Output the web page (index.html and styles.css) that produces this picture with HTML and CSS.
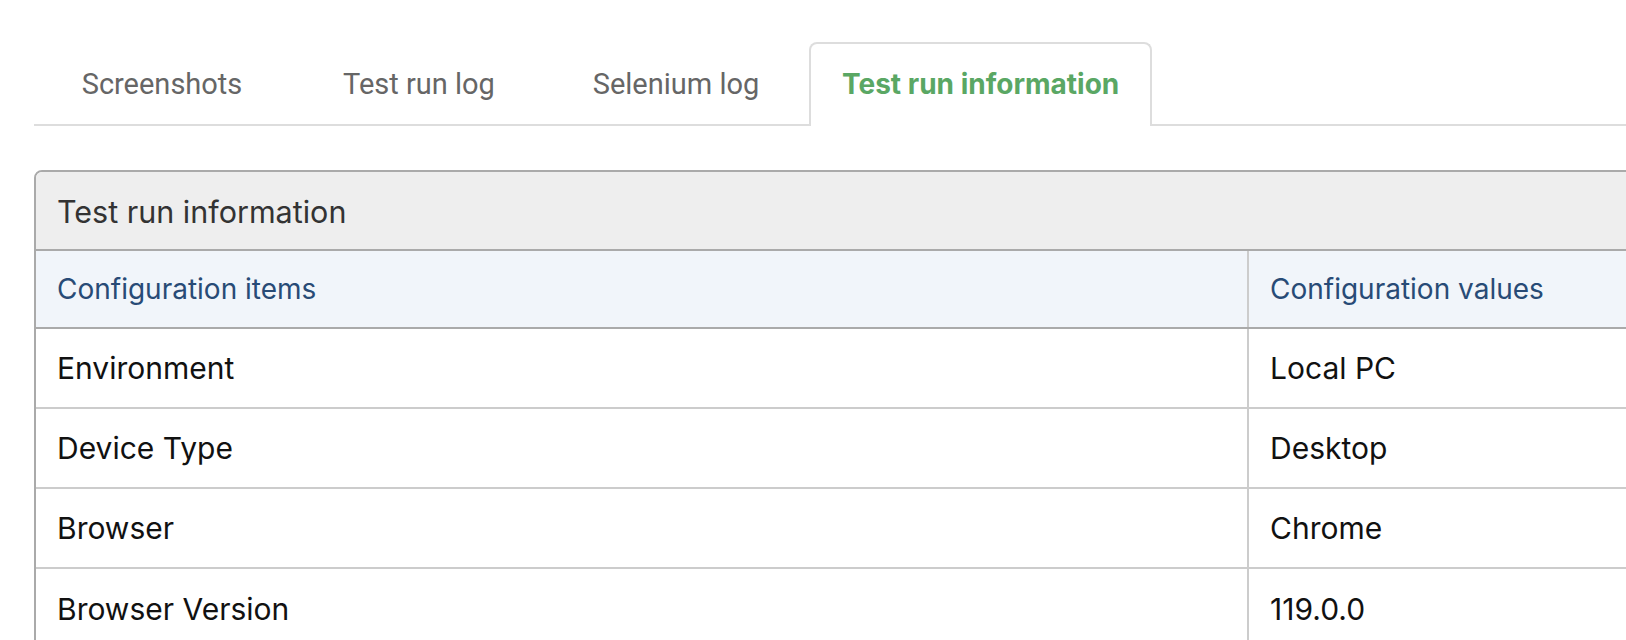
FILE: index.html
```html
<!doctype html>
<html lang="en">

<head>
    <meta charset="UTF-8" />
    <meta name="viewport" content="width=device-width, initial-scale=1.0" />
    <title>Test run report</title>
    <link rel="stylesheet" href="styles.css">
</head>

<body>
    <div class="report">
        <ul class="tabs">
            <li class="tab">Screenshots</li>
            <li class="tab">Test run log</li>
            <li class="tab">Selenium log</li>
            <li class="tab active">Test run information</li>
        </ul>

        <div class="panel">
            <div class="panel-heading">Test run information</div>
            <table class="info-table">
                <thead>
                    <tr>
                        <th class="col-item">Configuration items</th>
                        <th>Configuration values</th>
                    </tr>
                </thead>
                <tbody>
                    <tr>
                        <td>Environment</td>
                        <td>Local PC</td>
                    </tr>
                    <tr>
                        <td>Device Type</td>
                        <td>Desktop</td>
                    </tr>
                    <tr>
                        <td>Browser</td>
                        <td>Chrome</td>
                    </tr>
                    <tr>
                        <td>Browser Version</td>
                        <td>119.0.0</td>
                    </tr>
                </tbody>
            </table>
        </div>
    </div>
</body>

</html>
```

FILE: styles.css
```css
:root {
    --green: #5aa764;
    --tab-border: #dddddd;
    --panel-border: #aaaaaa;
    --row-border: #cccccc;
    --head-text: #284b76;
}

* {
    margin: 0;
    padding: 0;
    box-sizing: border-box;
}

body {
    background-color: white;
    font-family: Inter, "Noto Sans", sans-serif;
    overflow: hidden;
}

.report {
    padding: 42px 0 0 34px;
    width: 1800px;
}

.tabs {
    list-style: none;
    display: flex;
    border-bottom: 2px solid var(--tab-border);
    padding-left: 8px;
}

.tab {
    font-family: Roboto, "Liberation Sans", sans-serif;
    font-size: 29px;
    color: #666666;
    min-width: 240px;
    text-align: center;
    height: 82px;
    line-height: 80px;
    padding: 0 31px;
    margin-right: 17px;
    margin-bottom: -2px;
    border: 2px solid transparent;
    border-bottom: none;
}

.tab:nth-child(3) {
    margin-right: 13px;
}

.tab.active {
    font-family: Inter, "Noto Sans", sans-serif;
    font-weight: 700;
    font-size: 28px;
    color: var(--green);
    background-color: white;
    border-color: var(--tab-border);
    border-radius: 8px 8px 0 0;
    height: 84px;
}

.panel {
    margin-top: 44px;
    border: 2px solid var(--panel-border);
    border-radius: 8px 8px 0 0;
    overflow: hidden;
}

.panel-heading {
    background-color: #eeeeee;
    color: #333333;
    font-size: 30.5px;
    height: 79px;
    line-height: 79px;
    padding-left: 21px;
    border-bottom: 2px solid var(--panel-border);
}

.info-table {
    width: 100%;
    border-collapse: collapse;
    font-size: 30px;
}

.info-table th,
.info-table td {
    text-align: left;
    font-weight: 400;
    padding: 0 21px;
    height: 80px;
    border-top: 2px solid var(--row-border);
}

.info-table th {
    background-color: #f1f5fa;
    color: var(--head-text);
    font-size: 28px;
    height: 77px;
    border-top: none;
    border-bottom: 2px solid var(--panel-border);
}

.info-table td {
    color: #111111;
}

.info-table tbody tr:first-child td {
    border-top: none;
}

.info-table th:first-child,
.info-table td:first-child {
    width: 1212px;
    border-right: 2px solid var(--row-border);
}
```
